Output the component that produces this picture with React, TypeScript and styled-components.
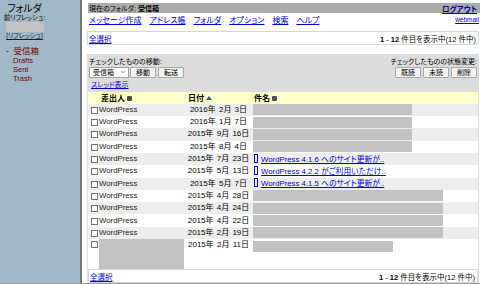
import styled, { createGlobalStyle } from 'styled-components';
import { ChevronDown } from 'lucide-react';

const GlobalStyle = createGlobalStyle`
  html, body { margin: 0; padding: 0; background: #ffffff; }
  body {
    font-family: "Liberation Sans", "Noto Sans CJK JP", sans-serif;
    font-feature-settings: "palt";
    color: #000000;
    overflow: hidden;
  }
`;

const Screen = styled.div`
  display: flex;
  width: 480px;
  height: 283px;
  border-bottom: 1px solid #9c9c9c;
  overflow: hidden;
`;

/* ---------- left frame ---------- */

const FolderPane = styled.aside`
  flex: none;
  width: 80px;
  background: #a0b8c8;
  border-right: 2px solid #767676;
  padding-top: 3px;
`;

const FolderHead = styled.div`
  width: 49px;
  display: flex;
  flex-direction: column;
  align-items: center;
`;

const FolderTitle = styled.div`
  font-size: 10px;
  line-height: 11px;
`;

const SmallNote = styled.div`
  font-size: 6.5px;
  line-height: 7px;
`;

const Redacted = styled.div<{ $w: number; $h: number }>`
  width: ${(p) => p.$w}px;
  height: ${(p) => p.$h}px;
  margin-top: 1px;
  background: #c4c4c4;
`;

const RefreshLink = styled.a`
  font-size: 6.5px;
  line-height: 8px;
  color: #1a1a33;
  text-decoration: underline;
`;

const FolderList = styled.ul`
  list-style: none;
  margin: 6px 0 0;
  padding: 0;
`;

const FolderItem = styled.li<{ $current?: boolean }>`
  color: #770000;
  font-size: ${(p) => (p.$current ? '8.5px' : '7.5px')};
  line-height: ${(p) => (p.$current ? '10px' : '9px')};
  padding-left: ${(p) => (p.$current ? '6px' : '13px')};
`;

/* ---------- right frame ---------- */

const MainPane = styled.main`
  flex: 1;
  min-width: 0;
  padding: 3px 1px 0 5px;
  display: flex;
  flex-direction: column;
`;

const TitleBar = styled.div`
  height: 10px;
  margin: 0 -1px 0 1px;
  padding: 0 3px 0 1px;
  background: #ababab;
  display: flex;
  justify-content: space-between;
  align-items: center;
  font-size: 7px;
`;

const SignOut = styled.a`
  color: #000099;
  font-size: 7.5px;
  font-weight: bold;
  text-decoration: underline;
`;

const NavRow = styled.div`
  height: 14px;
  padding-left: 2px;
  display: flex;
  justify-content: space-between;
  align-items: center;
`;

const NavLinks = styled.nav`
  display: flex;
  gap: 8px;
`;

const Link = styled.a<{ $size?: number }>`
  color: #0000cc;
  text-decoration: underline;
  font-size: ${(p) => p.$size ?? 7.5}px;
  white-space: nowrap;
`;

const CountBar = styled.div<{ $top?: number }>`
  height: 12px;
  margin-top: ${(p) => p.$top ?? 0}px;
  padding: 0 2px 0 1px;
  border: 1px solid #d6d6d6;
  display: flex;
  justify-content: space-between;
  align-items: center;
  font-size: 7.5px;
  background: #ffffff;
`;

const ListFrame = styled.section`
  margin-top: 9px;
  border: 1px solid #dcdcdc;
  border-bottom: none;
  background: #dcdcdc;
`;

const Controls = styled.div`
  height: 37px;
  padding: 2px 1px 0 1px;
  display: flex;
  justify-content: space-between;
  box-sizing: border-box;
`;

const ControlGroup = styled.div<{ $right?: boolean }>`
  display: flex;
  flex-direction: column;
  align-items: ${(p) => (p.$right ? 'flex-end' : 'flex-start')};
`;

const ControlLabel = styled.div`
  font-size: 7px;
  line-height: 8px;
  margin-top: 1px;
`;

const ButtonRow = styled.div`
  display: flex;
  gap: 2px;
  margin-top: 1px;
  height: 11px;
  align-items: center;
`;

const FakeSelect = styled.div`
  width: 33px;
  height: 9px;
  border: 1px solid #a0a0a0;
  background: #ffffff;
  font-size: 7px;
  display: flex;
  align-items: center;
  justify-content: space-between;
  padding: 0 2px 0 3px;
  box-sizing: content-box;
  margin-right: -1px;
`;

const Button = styled.button`
  height: 11px;
  width: 26px;
  padding: 0;
  border: 1px solid #a8a8a8;
  border-radius: 1px;
  background: #f2f2f2;
  font-family: inherit;
  font-size: 7px;
  line-height: 9px;
  color: #000000;
`;

const ThreadLink = styled(Link)`
  margin: 3px 0 0 2px;
  font-size: 7px;
  line-height: 8px;
`;

const Table = styled.table`
  width: 100%;
  table-layout: fixed;
  border-collapse: collapse;
  background: #ffffff;
`;

const HeadCell = styled.th<{ $pad: number; $w?: number }>`
  box-sizing: border-box;
  ${(p) => (p.$w ? `width: ${p.$w}px;` : '')}
  height: 12px;
  padding: 0 0 0 ${(p) => p.$pad}px;
  background: #ffffcc;
  text-align: left;
  font-size: 8px;
  font-weight: bold;
  white-space: nowrap;
`;

const SortNone = styled.span`
  display: inline-block;
  width: 5px;
  height: 5px;
  margin-left: 2px;
  background: #505050;
  border-radius: 1px;
  vertical-align: 0;
`;

const SortUp = styled.span`
  display: inline-block;
  width: 0;
  height: 0;
  margin-left: 2px;
  border-left: 3px solid transparent;
  border-right: 3px solid transparent;
  border-bottom: 4px solid #226a6a;
  vertical-align: 1px;
`;

const Row = styled.tr<{ $alt: boolean }>`
  background: ${(p) => (p.$alt ? '#ededed' : '#ffffff')};
`;

const Cell = styled.td<{ $center?: boolean; $tall?: boolean }>`
  height: ${(p) => (p.$tall ? '30px' : '12.3px')};
  padding: 0;
  vertical-align: ${(p) => (p.$tall ? 'top' : 'middle')};
  text-align: ${(p) => (p.$center ? 'center' : 'left')};
  font-size: 7.8px;
  line-height: 10px;
  white-space: nowrap;
  overflow: hidden;
`;

const SenderBox = styled.div`
  display: flex;
  align-items: flex-start;
  padding-left: 3px;
  color: #222222;
`;

const Check = styled.span`
  flex: none;
  width: 5px;
  height: 5px;
  margin: 2px 1px 0 0;
  border: 1px solid #707070;
  background: #ffffff;
`;

const DateText = styled.span<{ $tall?: boolean }>`
  display: inline-block;
  font-size: 8px;
  word-spacing: 1px;
  ${(p) => (p.$tall ? 'margin-top: 1px;' : '')}
`;

const SubjectLink = styled(Link)`
  font-size: 7.8px;
  padding-left: 1px;
`;

const Tofu = styled.span`
  display: inline-block;
  width: 2px;
  height: 7px;
  border: 1px solid #0000cc;
  margin-right: 3px;
  vertical-align: -1px;
`;

const Blackout = styled.div<{ $w: number; $top?: number }>`
  width: ${(p) => p.$w}px;
  height: 11px;
  margin-top: ${(p) => p.$top ?? 0}px;
  background: #c2c2c2;
`;

const TallBlackout = styled.div`
  width: 85px;
  height: 30px;
  background: #c2c2c2;
`;

type Message = {
  date: string;
  subject?: string;
  hidden?: number;
};

const messages: Message[] = [
  { date: '2016年 2月 3日', hidden: 159 },
  { date: '2016年 1月 7日', hidden: 159 },
  { date: '2015年 9月 16日', hidden: 159 },
  { date: '2015年 8月 4日', hidden: 159 },
  { date: '2015年 7月 23日', subject: 'WordPress 4.1.6 へのサイト更新が..' },
  { date: '2015年 5月 13日', subject: 'WordPress 4.2.2 がご利用いただけ..' },
  { date: '2015年 5月 7日', subject: 'WordPress 4.1.5 へのサイト更新が..' },
  { date: '2015年 4月 28日', hidden: 190 },
  { date: '2015年 4月 24日', hidden: 190 },
  { date: '2015年 4月 22日', hidden: 190 },
  { date: '2015年 2月 19日', hidden: 190 },
  { date: '2015年 2月 11日', hidden: 140 },
];

const Counter = () => (
  <span>
    <b>1</b> - <b>12</b> 件目を表示中(12 件中)
  </span>
);

export default function App() {
  return (
    <>
      <GlobalStyle />
      <Screen>
        <FolderPane>
          <FolderHead>
            <FolderTitle>フォルダ</FolderTitle>
            <SmallNote>前リフレッシュ:</SmallNote>
            <Redacted $w={38} $h={10} />
            <RefreshLink>[リフレッシュ]</RefreshLink>
          </FolderHead>
          <FolderList>
            <FolderItem $current>-&nbsp; 受信箱</FolderItem>
            <FolderItem>Drafts</FolderItem>
            <FolderItem>Sent</FolderItem>
            <FolderItem>Trash</FolderItem>
          </FolderList>
        </FolderPane>

        <MainPane>
          <TitleBar>
            <span>
              現在のフォルダ: <b>受信箱</b>
            </span>
            <SignOut>ログアウト</SignOut>
          </TitleBar>
          <NavRow>
            <NavLinks>
              <Link $size={8}>メッセージ作成</Link>
              <Link $size={8}>アドレス帳</Link>
              <Link $size={8}>フォルダ</Link>
              <Link $size={8}>オプション</Link>
              <Link $size={8}>検索</Link>
              <Link $size={8}>ヘルプ</Link>
            </NavLinks>
            <Link $size={6.5}>webmail</Link>
          </NavRow>

          <CountBar $top={5}>
            <Link>全選択</Link>
            <Counter />
          </CountBar>

          <ListFrame>
            <Controls>
              <ControlGroup>
                <ControlLabel>チェックしたものの移動:</ControlLabel>
                <ButtonRow>
                  <FakeSelect>
                    受信箱
                    <ChevronDown size={6} strokeWidth={2} />
                  </FakeSelect>
                  <Button>移動</Button>
                  <Button>転送</Button>
                </ButtonRow>
                <ThreadLink>スレッド表示</ThreadLink>
              </ControlGroup>
              <ControlGroup $right>
                <ControlLabel>チェックしたものの状態変更:</ControlLabel>
                <ButtonRow>
                  <Button>既読</Button>
                  <Button>未読</Button>
                  <Button>削除</Button>
                </ButtonRow>
              </ControlGroup>
            </Controls>

            <Table>
              <thead>
                <tr>
                  <HeadCell $pad={13} $w={96}>
                    差出人
                    <SortNone />
                  </HeadCell>
                  <HeadCell $pad={4} $w={69}>
                    日付
                    <SortUp />
                  </HeadCell>
                  <HeadCell $pad={1}>
                    件名
                    <SortNone />
                  </HeadCell>
                </tr>
              </thead>
              <tbody>
                {messages.map((m, i) => {
                  const last = i === messages.length - 1;
                  return (
                    <Row key={m.date} $alt={i % 2 === 0}>
                      <Cell $tall={last}>
                        <SenderBox>
                          <Check />
                          {last ? <TallBlackout /> : 'WordPress'}
                        </SenderBox>
                      </Cell>
                      <Cell $center $tall={last}>
                        <DateText $tall={last}>{m.date}</DateText>
                      </Cell>
                      <Cell $tall={last}>
                        {m.subject ? (
                          <SubjectLink>
                            <Tofu />
                            {m.subject}
                          </SubjectLink>
                        ) : (
                          <Blackout $w={m.hidden ?? 150} $top={last ? 2 : 0} />
                        )}
                      </Cell>
                    </Row>
                  );
                })}
              </tbody>
            </Table>

            <CountBar>
              <Link>全選択</Link>
              <Counter />
            </CountBar>
          </ListFrame>
        </MainPane>
      </Screen>
    </>
  );
}
